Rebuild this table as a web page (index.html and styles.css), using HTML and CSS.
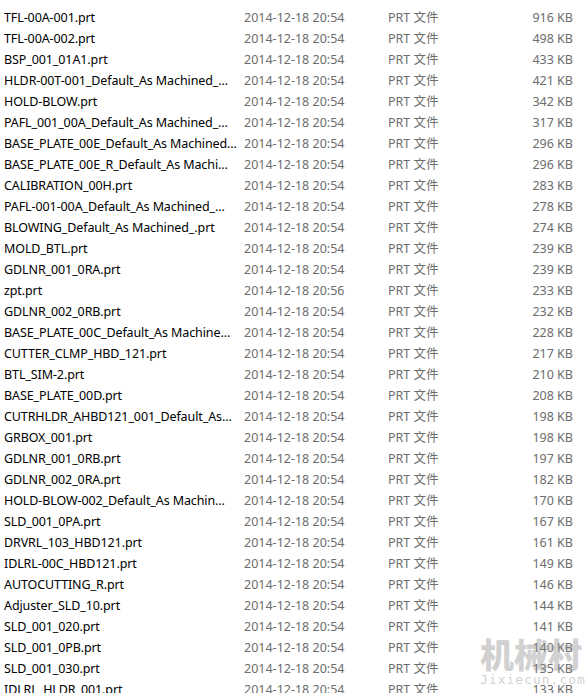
FILE: index.html
```html
<!DOCTYPE html>
<html>
<head>
<meta charset="utf-8">
<link rel="stylesheet" href="styles.css">
</head>
<body>
<div class="list">
  <div class="row"><span class="name">TFL-00A-001.prt</span><span class="date">2014-12-18 20:54</span><span class="type">PRT 文件</span><span class="size">916 KB</span></div>
  <div class="row"><span class="name">TFL-00A-002.prt</span><span class="date">2014-12-18 20:54</span><span class="type">PRT 文件</span><span class="size">498 KB</span></div>
  <div class="row"><span class="name">BSP_001_01A1.prt</span><span class="date">2014-12-18 20:54</span><span class="type">PRT 文件</span><span class="size">433 KB</span></div>
  <div class="row"><span class="name">HLDR-00T-001_Default_As Machined_...</span><span class="date">2014-12-18 20:54</span><span class="type">PRT 文件</span><span class="size">421 KB</span></div>
  <div class="row"><span class="name">HOLD-BLOW.prt</span><span class="date">2014-12-18 20:54</span><span class="type">PRT 文件</span><span class="size">342 KB</span></div>
  <div class="row"><span class="name">PAFL_001_00A_Default_As Machined_...</span><span class="date">2014-12-18 20:54</span><span class="type">PRT 文件</span><span class="size">317 KB</span></div>
  <div class="row"><span class="name">BASE_PLATE_00E_Default_As Machined...</span><span class="date">2014-12-18 20:54</span><span class="type">PRT 文件</span><span class="size">296 KB</span></div>
  <div class="row"><span class="name">BASE_PLATE_00E_R_Default_As Machi...</span><span class="date">2014-12-18 20:54</span><span class="type">PRT 文件</span><span class="size">296 KB</span></div>
  <div class="row"><span class="name">CALIBRATION_00H.prt</span><span class="date">2014-12-18 20:54</span><span class="type">PRT 文件</span><span class="size">283 KB</span></div>
  <div class="row"><span class="name">PAFL-001-00A_Default_As Machined_...</span><span class="date">2014-12-18 20:54</span><span class="type">PRT 文件</span><span class="size">278 KB</span></div>
  <div class="row"><span class="name">BLOWING_Default_As Machined_.prt</span><span class="date">2014-12-18 20:54</span><span class="type">PRT 文件</span><span class="size">274 KB</span></div>
  <div class="row"><span class="name">MOLD_BTL.prt</span><span class="date">2014-12-18 20:54</span><span class="type">PRT 文件</span><span class="size">239 KB</span></div>
  <div class="row"><span class="name">GDLNR_001_0RA.prt</span><span class="date">2014-12-18 20:54</span><span class="type">PRT 文件</span><span class="size">239 KB</span></div>
  <div class="row"><span class="name">zpt.prt</span><span class="date">2014-12-18 20:56</span><span class="type">PRT 文件</span><span class="size">233 KB</span></div>
  <div class="row"><span class="name">GDLNR_002_0RB.prt</span><span class="date">2014-12-18 20:54</span><span class="type">PRT 文件</span><span class="size">232 KB</span></div>
  <div class="row"><span class="name">BASE_PLATE_00C_Default_As Machine...</span><span class="date">2014-12-18 20:54</span><span class="type">PRT 文件</span><span class="size">228 KB</span></div>
  <div class="row"><span class="name">CUTTER_CLMP_HBD_121.prt</span><span class="date">2014-12-18 20:54</span><span class="type">PRT 文件</span><span class="size">217 KB</span></div>
  <div class="row"><span class="name">BTL_SIM-2.prt</span><span class="date">2014-12-18 20:54</span><span class="type">PRT 文件</span><span class="size">210 KB</span></div>
  <div class="row"><span class="name">BASE_PLATE_00D.prt</span><span class="date">2014-12-18 20:54</span><span class="type">PRT 文件</span><span class="size">208 KB</span></div>
  <div class="row"><span class="name">CUTRHLDR_AHBD121_001_Default_As...</span><span class="date">2014-12-18 20:54</span><span class="type">PRT 文件</span><span class="size">198 KB</span></div>
  <div class="row"><span class="name">GRBOX_001.prt</span><span class="date">2014-12-18 20:54</span><span class="type">PRT 文件</span><span class="size">198 KB</span></div>
  <div class="row"><span class="name">GDLNR_001_0RB.prt</span><span class="date">2014-12-18 20:54</span><span class="type">PRT 文件</span><span class="size">197 KB</span></div>
  <div class="row"><span class="name">GDLNR_002_0RA.prt</span><span class="date">2014-12-18 20:54</span><span class="type">PRT 文件</span><span class="size">182 KB</span></div>
  <div class="row"><span class="name">HOLD-BLOW-002_Default_As Machin...</span><span class="date">2014-12-18 20:54</span><span class="type">PRT 文件</span><span class="size">170 KB</span></div>
  <div class="row"><span class="name">SLD_001_0PA.prt</span><span class="date">2014-12-18 20:54</span><span class="type">PRT 文件</span><span class="size">167 KB</span></div>
  <div class="row"><span class="name">DRVRL_103_HBD121.prt</span><span class="date">2014-12-18 20:54</span><span class="type">PRT 文件</span><span class="size">161 KB</span></div>
  <div class="row"><span class="name">IDLRL-00C_HBD121.prt</span><span class="date">2014-12-18 20:54</span><span class="type">PRT 文件</span><span class="size">149 KB</span></div>
  <div class="row"><span class="name">AUTOCUTTING_R.prt</span><span class="date">2014-12-18 20:54</span><span class="type">PRT 文件</span><span class="size">146 KB</span></div>
  <div class="row"><span class="name">Adjuster_SLD_10.prt</span><span class="date">2014-12-18 20:54</span><span class="type">PRT 文件</span><span class="size">144 KB</span></div>
  <div class="row"><span class="name">SLD_001_020.prt</span><span class="date">2014-12-18 20:54</span><span class="type">PRT 文件</span><span class="size">141 KB</span></div>
  <div class="row"><span class="name">SLD_001_0PB.prt</span><span class="date">2014-12-18 20:54</span><span class="type">PRT 文件</span><span class="size">140 KB</span></div>
  <div class="row"><span class="name">SLD_001_030.prt</span><span class="date">2014-12-18 20:54</span><span class="type">PRT 文件</span><span class="size">135 KB</span></div>
  <div class="row"><span class="name">IDLRL_HLDR_001.prt</span><span class="date">2014-12-18 20:54</span><span class="type">PRT 文件</span><span class="size">133 KB</span></div>
</div>
<div class="watermark">
  <div class="wm-cn">机械村</div>
  <div class="wm-en">Jixiecun.com</div>
</div>
</body>
</html>
```

FILE: styles.css
```css
html, body {
  margin: 0;
  padding: 0;
  background: #ffffff;
  overflow: hidden;
}
body {
  width: 586px;
  height: 693px;
  position: relative;
  font-family: "Noto Sans", "Noto Sans CJK SC", sans-serif;
  font-size: 12.5px;
}
.list {
  padding-top: 7px;
}
.row {
  display: grid;
  grid-template-columns: 240px 144px 1fr auto;
  height: 21px;
  line-height: 21px;
  padding-left: 4px;
  padding-right: 13px;
  white-space: nowrap;
}
.name {
  color: #000000;
  overflow: hidden;
  letter-spacing: -0.1px;
}
.date, .type, .size {
  color: #6d6d6d;
}
.size {
  text-align: right;
}
.watermark {
  position: absolute;
  left: 480px;
  top: 634px;
  width: 102px;
  text-align: center;
  pointer-events: none;
}
.wm-cn {
  font-family: "Noto Sans CJK SC", sans-serif;
  font-weight: 900;
  font-size: 34px;
  line-height: 40px;
  color: rgba(150, 150, 150, 0.45);
}
.wm-en {
  font-family: "DejaVu Sans Mono", monospace;
  font-size: 13px;
  line-height: 14px;
  margin-top: -1px;
  letter-spacing: 1px;
  color: rgba(150, 150, 150, 0.45);
}
```
